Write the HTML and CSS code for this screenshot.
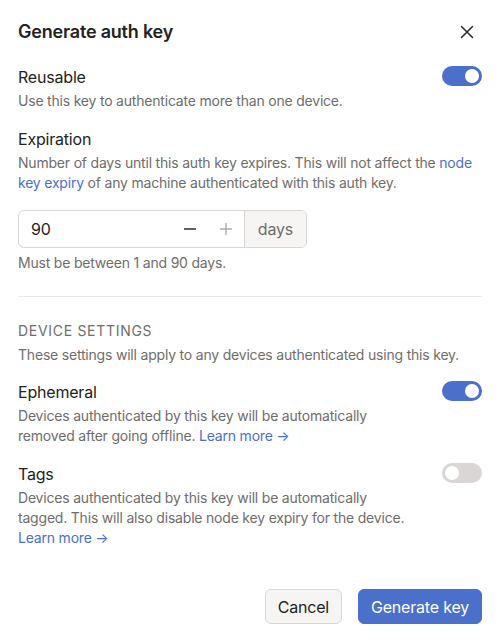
FILE: index.html
```html
<!DOCTYPE html>
<html lang="en">
<head>
    <meta charset="UTF-8">
    <meta name="viewport" content="width=device-width, initial-scale=1.0">
    <title>Generate auth key</title>
    <link rel="stylesheet" href="styles.css">
</head>
<body>
    <div class="modal">
        <div class="modal-header">
            <h1>Generate auth key</h1>
            <button class="close-btn" aria-label="Close">
                <svg width="14" height="14" viewBox="0 0 14 14"><path d="M1.5 1.5 L12.5 12.5 M12.5 1.5 L1.5 12.5" stroke="#2e2d2d" stroke-width="1.6" stroke-linecap="round"/></svg>
            </button>
        </div>

        <div class="setting first">
            <div class="setting-text">
                <div class="label">Reusable</div>
                <p class="desc">Use this key to authenticate more than one device.</p>
            </div>
            <span class="toggle on"></span>
        </div>

        <div class="section">
            <div class="label">Expiration</div>
            <p class="desc">Number of days until this auth key expires. This will not affect the <a href="#">node key expiry</a> of any machine authenticated with this auth key.</p>
            <div class="number-field">
                <div class="number-input">
                    <span class="value">90</span>
                    <span class="step minus">
                        <svg width="14" height="14" viewBox="0 0 14 14"><path d="M1 7 H13" stroke="#2e2d2d" stroke-width="1.6"/></svg>
                    </span>
                    <span class="step plus">
                        <svg width="14" height="14" viewBox="0 0 14 14"><path d="M1 7 H13 M7 1 V13" stroke="#aeacab" stroke-width="1.4"/></svg>
                    </span>
                </div>
                <span class="addon">days</span>
            </div>
            <p class="hint">Must be between 1 and 90 days.</p>
        </div>

        <hr class="divider">

        <div class="group-title">Device settings</div>
        <p class="desc group-desc">These settings will apply to any devices authenticated using this key.</p>

        <div class="setting">
            <div class="setting-text">
                <div class="label">Ephemeral</div>
                <p class="desc">Devices authenticated by this key will be automatically removed after going offline. <a href="#">Learn more &rarr;</a></p>
            </div>
            <span class="toggle on"></span>
        </div>

        <div class="setting">
            <div class="setting-text">
                <div class="label">Tags</div>
                <p class="desc">Devices authenticated by this key will be automatically tagged. This will also disable node key expiry for the device. <a href="#">Learn more &rarr;</a></p>
            </div>
            <span class="toggle"></span>
        </div>

        <div class="actions">
            <button class="btn btn-secondary">Cancel</button>
            <button class="btn btn-primary">Generate key</button>
        </div>
    </div>
</body>
</html>
```

FILE: styles.css
```css
body {
    margin: 0;
    font-family: Inter, "Noto Sans", sans-serif;
    letter-spacing: -0.2px;
    background-color: #fff;
    color: #2e2d2d;
}

.modal {
    width: 501px;
    box-sizing: border-box;
    padding: 18px 19px 0 18px;
}

.modal-header {
    display: flex;
    justify-content: space-between;
    align-items: center;
    height: 28px;
}

    .modal-header h1 {
        margin: 0;
        font-size: 18px;
        line-height: 28px;
        font-weight: 600;
        color: #232222;
    }

.close-btn {
    display: flex;
    align-items: center;
    justify-content: center;
    width: 24px;
    height: 24px;
    margin-right: 3px;
    padding: 0;
    border: none;
    background: none;
    cursor: pointer;
}

.label {
    font-size: 16px;
    line-height: 24px;
    font-weight: 420;
    color: #232222;
}

.desc {
    margin: 2px 0 0;
    font-size: 14px;
    line-height: 20px;
    color: #6f6d6c;
}

    .desc a {
        color: #4b70cc;
        text-decoration: none;
    }

.setting {
    display: flex;
    justify-content: space-between;
    align-items: flex-start;
    gap: 24px;
    margin-top: 16px;
}

    .setting.first {
        margin-top: 19px;
    }

.setting-text {
    flex: 1;
    max-width: 400px;
}

.toggle {
    position: relative;
    flex-shrink: 0;
    width: 40px;
    height: 20px;
    margin-top: 1px;
    border-radius: 10px;
    background-color: #dad6d5;
}

    .toggle::after {
        content: "";
        position: absolute;
        top: 3px;
        left: 3px;
        width: 14px;
        height: 14px;
        border-radius: 50%;
        background: #fff;
    }

    .toggle.on {
        background-color: #4b70cc;
    }

        .toggle.on::after {
            left: 23px;
        }

.section {
    margin-top: 16px;
}

.number-field {
    display: flex;
    width: 289px;
    height: 38px;
    margin-top: 17px;
    border: 1px solid #dad6d5;
    border-radius: 6px;
    box-sizing: border-box;
    overflow: hidden;
}

.number-input {
    display: flex;
    align-items: center;
    flex: 1;
    padding-left: 12px;
}

    .number-input .value {
        flex: 1;
        font-size: 16px;
        color: #232222;
    }

.step {
    display: flex;
    align-items: center;
    justify-content: center;
    width: 36px;
    height: 100%;
}

.addon {
    display: flex;
    align-items: center;
    padding: 0 13px;
    background-color: #f7f5f4;
    border-left: 1px solid #dad6d5;
    font-size: 16px;
    color: #6f6d6c;
}

.hint {
    margin: 5px 0 0;
    font-size: 14px;
    line-height: 20px;
    color: #6f6d6c;
}

.divider {
    margin: 23px 0 0;
    border: none;
    border-top: 1px solid #eceae9;
}

.group-title {
    margin-top: 24px;
    font-size: 14px;
    line-height: 20px;
    font-weight: 400;
    letter-spacing: 0.05em;
    text-transform: uppercase;
    color: #6f6d6c;
}

.group-desc {
    margin-top: 4px;
}

.group-desc + .setting {
    margin-top: 15px;
}

.actions {
    display: flex;
    justify-content: flex-end;
    gap: 16px;
    margin-top: 41px;
}

.btn {
    height: 35px;
    padding: 0 12px;
    border-radius: 6px;
    font-family: inherit;
    font-size: 16px;
    letter-spacing: -0.2px;
    cursor: pointer;
}

.btn-secondary {
    background-color: #f7f5f4;
    border: 1px solid #dad6d5;
    color: #232222;
}

.btn-primary {
    background-color: #4b70cc;
    border: 1px solid #4b70cc;
    color: #fff;
}
```
